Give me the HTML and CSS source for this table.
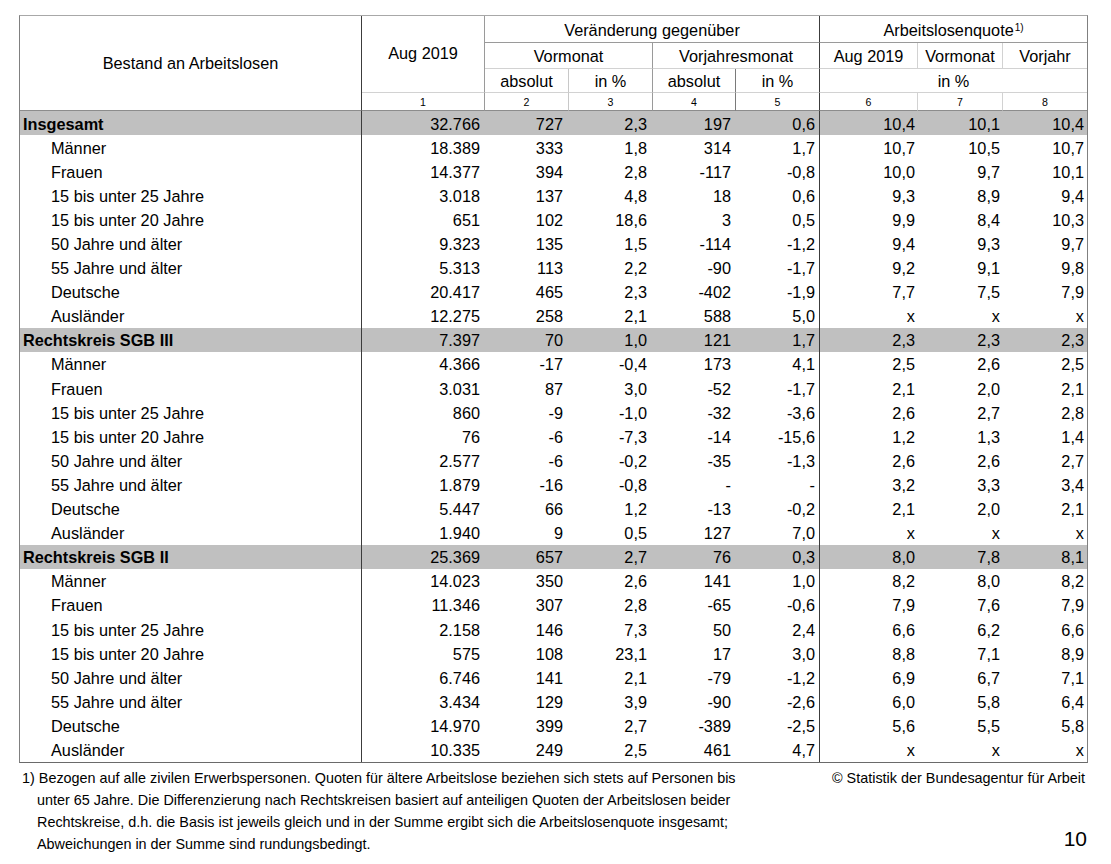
FILE: index.html
```html
<!DOCTYPE html>
<html lang="de">
<head>
<meta charset="utf-8">
<title>Bestand an Arbeitslosen</title>
<link rel="stylesheet" href="styles.css">
</head>
<body>
<div class="page">
  <div class="tbl">
    <div class="h h-label">Bestand an Arbeitslosen</div>
    <div class="h h-aug">Aug 2019</div>
    <div class="h h-ver">Veränderung gegenüber</div>
    <div class="h h-alq">Arbeitslosenquote<sup>1)</sup></div>

    <div class="h h-vm">Vormonat</div>
    <div class="h h-vj">Vorjahresmonat</div>
    <div class="h h-q1">Aug 2019</div>
    <div class="h h-q2">Vormonat</div>
    <div class="h h-q3">Vorjahr</div>

    <div class="h h-a1">absolut</div>
    <div class="h h-p1">in %</div>
    <div class="h h-a2">absolut</div>
    <div class="h h-p2">in %</div>
    <div class="h h-pq">in %</div>

    <div class="h n n1">1</div>
    <div class="h n n2">2</div>
    <div class="h n n3">3</div>
    <div class="h n n4">4</div>
    <div class="h n n5">5</div>
    <div class="h n n6">6</div>
    <div class="h n n7">7</div>
    <div class="h n n8">8</div>

    <div class="r g"><div>Insgesamt</div><div>32.766</div><div>727</div><div>2,3</div><div>197</div><div>0,6</div><div>10,4</div><div>10,1</div><div>10,4</div></div>
    <div class="r"><div>Männer</div><div>18.389</div><div>333</div><div>1,8</div><div>314</div><div>1,7</div><div>10,7</div><div>10,5</div><div>10,7</div></div>
    <div class="r"><div>Frauen</div><div>14.377</div><div>394</div><div>2,8</div><div>-117</div><div>-0,8</div><div>10,0</div><div>9,7</div><div>10,1</div></div>
    <div class="r"><div>15 bis unter 25 Jahre</div><div>3.018</div><div>137</div><div>4,8</div><div>18</div><div>0,6</div><div>9,3</div><div>8,9</div><div>9,4</div></div>
    <div class="r"><div>15 bis unter 20 Jahre</div><div>651</div><div>102</div><div>18,6</div><div>3</div><div>0,5</div><div>9,9</div><div>8,4</div><div>10,3</div></div>
    <div class="r"><div>50 Jahre und älter</div><div>9.323</div><div>135</div><div>1,5</div><div>-114</div><div>-1,2</div><div>9,4</div><div>9,3</div><div>9,7</div></div>
    <div class="r"><div>55 Jahre und älter</div><div>5.313</div><div>113</div><div>2,2</div><div>-90</div><div>-1,7</div><div>9,2</div><div>9,1</div><div>9,8</div></div>
    <div class="r"><div>Deutsche</div><div>20.417</div><div>465</div><div>2,3</div><div>-402</div><div>-1,9</div><div>7,7</div><div>7,5</div><div>7,9</div></div>
    <div class="r"><div>Ausländer</div><div>12.275</div><div>258</div><div>2,1</div><div>588</div><div>5,0</div><div>x</div><div>x</div><div>x</div></div>

    <div class="r g"><div>Rechtskreis SGB III</div><div>7.397</div><div>70</div><div>1,0</div><div>121</div><div>1,7</div><div>2,3</div><div>2,3</div><div>2,3</div></div>
    <div class="r"><div>Männer</div><div>4.366</div><div>-17</div><div>-0,4</div><div>173</div><div>4,1</div><div>2,5</div><div>2,6</div><div>2,5</div></div>
    <div class="r"><div>Frauen</div><div>3.031</div><div>87</div><div>3,0</div><div>-52</div><div>-1,7</div><div>2,1</div><div>2,0</div><div>2,1</div></div>
    <div class="r"><div>15 bis unter 25 Jahre</div><div>860</div><div>-9</div><div>-1,0</div><div>-32</div><div>-3,6</div><div>2,6</div><div>2,7</div><div>2,8</div></div>
    <div class="r"><div>15 bis unter 20 Jahre</div><div>76</div><div>-6</div><div>-7,3</div><div>-14</div><div>-15,6</div><div>1,2</div><div>1,3</div><div>1,4</div></div>
    <div class="r"><div>50 Jahre und älter</div><div>2.577</div><div>-6</div><div>-0,2</div><div>-35</div><div>-1,3</div><div>2,6</div><div>2,6</div><div>2,7</div></div>
    <div class="r"><div>55 Jahre und älter</div><div>1.879</div><div>-16</div><div>-0,8</div><div>-</div><div>-</div><div>3,2</div><div>3,3</div><div>3,4</div></div>
    <div class="r"><div>Deutsche</div><div>5.447</div><div>66</div><div>1,2</div><div>-13</div><div>-0,2</div><div>2,1</div><div>2,0</div><div>2,1</div></div>
    <div class="r"><div>Ausländer</div><div>1.940</div><div>9</div><div>0,5</div><div>127</div><div>7,0</div><div>x</div><div>x</div><div>x</div></div>

    <div class="r g"><div>Rechtskreis SGB II</div><div>25.369</div><div>657</div><div>2,7</div><div>76</div><div>0,3</div><div>8,0</div><div>7,8</div><div>8,1</div></div>
    <div class="r"><div>Männer</div><div>14.023</div><div>350</div><div>2,6</div><div>141</div><div>1,0</div><div>8,2</div><div>8,0</div><div>8,2</div></div>
    <div class="r"><div>Frauen</div><div>11.346</div><div>307</div><div>2,8</div><div>-65</div><div>-0,6</div><div>7,9</div><div>7,6</div><div>7,9</div></div>
    <div class="r"><div>15 bis unter 25 Jahre</div><div>2.158</div><div>146</div><div>7,3</div><div>50</div><div>2,4</div><div>6,6</div><div>6,2</div><div>6,6</div></div>
    <div class="r"><div>15 bis unter 20 Jahre</div><div>575</div><div>108</div><div>23,1</div><div>17</div><div>3,0</div><div>8,8</div><div>7,1</div><div>8,9</div></div>
    <div class="r"><div>50 Jahre und älter</div><div>6.746</div><div>141</div><div>2,1</div><div>-79</div><div>-1,2</div><div>6,9</div><div>6,7</div><div>7,1</div></div>
    <div class="r"><div>55 Jahre und älter</div><div>3.434</div><div>129</div><div>3,9</div><div>-90</div><div>-2,6</div><div>6,0</div><div>5,8</div><div>6,4</div></div>
    <div class="r"><div>Deutsche</div><div>14.970</div><div>399</div><div>2,7</div><div>-389</div><div>-2,5</div><div>5,6</div><div>5,5</div><div>5,8</div></div>
    <div class="r"><div>Ausländer</div><div>10.335</div><div>249</div><div>2,5</div><div>461</div><div>4,7</div><div>x</div><div>x</div><div>x</div></div>
  </div>

  <div class="foot">
    <p class="note">1) Bezogen auf alle zivilen Erwerbspersonen. Quoten für ältere Arbeitslose beziehen sich stets auf Personen bis<br>unter 65 Jahre. Die Differenzierung nach Rechtskreisen basiert auf anteiligen Quoten der Arbeitslosen beider<br>Rechtskreise, d.h. die Basis ist jeweils gleich und in der Summe ergibt sich die Arbeitslosenquote insgesamt;<br>Abweichungen in der Summe sind rundungsbedingt.</p>
    <div class="side">
      <p class="copy">© Statistik der Bundesagentur für Arbeit</p>
      <p class="pnum">10</p>
    </div>
  </div>
</div>
</body>
</html>
```

FILE: styles.css
```css
body {
  margin: 0;
  background: #fff;
  color: #000;
  font-family: "Liberation Sans", Arial, sans-serif;
}

.page {
  padding: 15px 0 0 19px;
  width: 1069px;
}

.tbl {
  display: grid;
  width: 1069px;
  box-sizing: border-box;
  grid-template-columns: 342px 123px 84px 84px 83px 84px 98px 85px 84px;
  grid-template-rows: 27px 26px 24px 18px;
  grid-auto-rows: 24.1px;
  border-top: 1px solid #a8a8a8;
  border-left: 1px solid #808080;
  border-right: 1px solid #808080;
  border-bottom: 1px solid #6a6a6a;
  font-size: 16.3px;
}

/* header cells */
.h {
  display: flex;
  align-items: center;
  justify-content: center;
  box-sizing: border-box;
  white-space: nowrap;
  padding-top: 1px;
}
.h sup {
  font-size: 10px;
  line-height: 0;
  position: relative;
  top: -3px;
  margin-left: 1px;
  vertical-align: super;
}

.h-label { grid-column: 1; grid-row: 1 / span 4; border-right: 1px solid #3c3c3c; border-bottom: 1px solid #8c8c8c; }
.h-aug   { grid-column: 2; grid-row: 1 / span 3; border-right: 1px solid #9a9a9a; border-bottom: 1px solid #d2d2d2; padding-bottom: 3px; }
.h-ver   { grid-column: 3 / span 4; grid-row: 1; border-right: 1px solid #3c3c3c; border-bottom: 1px solid #9a9a9a; padding-top: 3px; }
.h-alq   { grid-column: 7 / span 3; grid-row: 1; border-bottom: 1px solid #9a9a9a; padding-top: 3px; }

.h-vm { grid-column: 3 / span 2; grid-row: 2; border-right: 1px solid #9a9a9a; border-bottom: 1px solid #d2d2d2; }
.h-vj { grid-column: 5 / span 2; grid-row: 2; border-right: 1px solid #3c3c3c; border-bottom: 1px solid #d2d2d2; }
.h-q1 { grid-column: 7; grid-row: 2; border-right: 1px solid #d2d2d2; border-bottom: 1px solid #d2d2d2; }
.h-q2 { grid-column: 8; grid-row: 2; border-right: 1px solid #d2d2d2; border-bottom: 1px solid #d2d2d2; }
.h-q3 { grid-column: 9; grid-row: 2; border-bottom: 1px solid #d2d2d2; }

.h-a1 { grid-column: 3; grid-row: 3; border-right: 1px solid #c8c8c8; border-bottom: 1px solid #d2d2d2; }
.h-p1 { grid-column: 4; grid-row: 3; border-right: 1px solid #9a9a9a; border-bottom: 1px solid #d2d2d2; }
.h-a2 { grid-column: 5; grid-row: 3; border-right: 1px solid #7a7a7a; border-bottom: 1px solid #d2d2d2; }
.h-p2 { grid-column: 6; grid-row: 3; border-right: 1px solid #3c3c3c; border-bottom: 1px solid #d2d2d2; }
.h-pq { grid-column: 7 / span 3; grid-row: 3; border-bottom: 1px solid #d2d2d2; }

.n { grid-row: 4; font-size: 10.6px; border-bottom: 1px solid #8c8c8c; padding-top: 0; }
.n1 { grid-column: 2; border-right: 1px solid #9a9a9a; }
.n2 { grid-column: 3; border-right: 1px solid #c8c8c8; }
.n3 { grid-column: 4; border-right: 1px solid #9a9a9a; }
.n4 { grid-column: 5; border-right: 1px solid #7a7a7a; }
.n5 { grid-column: 6; border-right: 1px solid #3c3c3c; }
.n6 { grid-column: 7; border-right: 1px solid #d2d2d2; }
.n7 { grid-column: 8; border-right: 1px solid #d2d2d2; }
.n8 { grid-column: 9; }

/* body rows */
.r { display: contents; }
.r > div {
  display: flex;
  align-items: center;
  justify-content: flex-end;
  box-sizing: border-box;
  padding: 2px 5px 0 0;
  white-space: nowrap;
}
.r > div:first-child {
  justify-content: flex-start;
  padding-left: 31px;
  border-right: 1px solid #3c3c3c;
}
.r > div:nth-child(3),
.r > div:nth-child(4) { padding-right: 6px; }
.r > div:nth-child(6) {
  padding-right: 4px;
  border-right: 1px solid #3c3c3c;
}
.r > div:nth-child(n+7) { padding-right: 3px; }

.g > div { background: #c0c0c0; }
.g > div:first-child {
  font-weight: bold;
  padding-left: 3px;
}

/* footer */
.foot {
  display: flex;
  justify-content: space-between;
  width: 1069px;
  margin-top: 4px;
  font-size: 14.4px;
  line-height: 22px;
}
.foot p { margin: 0; }
.note {
  padding-left: 18px;
  text-indent: -15px;
}
.side {
  display: flex;
  flex-direction: column;
  align-items: flex-end;
}
.copy { padding-right: 3px; }
.pnum {
  font-size: 21px;
  line-height: 21px;
  margin-top: 39px !important;
  padding-right: 1px;
}
```
